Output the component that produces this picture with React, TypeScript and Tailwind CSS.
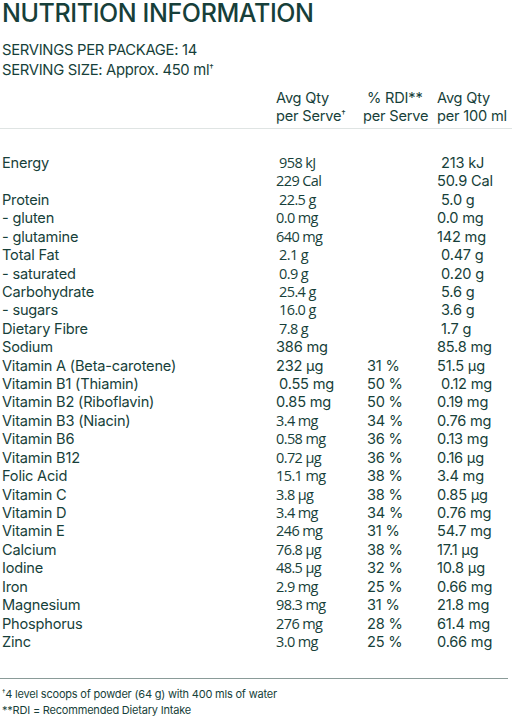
import React from 'react';

type Row = {
  name: string;
  serve: string;
  rdi?: string;
  per100: string;
  small?: boolean; // per-serve value set in the narrower face
  sIn?: boolean; // per-serve value nudged right
  pIn?: boolean; // per-100 value nudged right
  serve2?: string;
  per1002?: string;
};

const rows: Row[] = [
  { name: 'Energy', serve: '958 kJ', serve2: '229 Cal', per100: '213 kJ', per1002: '50.9 Cal', small: true, sIn: true, pIn: true },
  { name: 'Protein', serve: '22.5 g', per100: '5.0 g', small: true, sIn: true, pIn: true },
  { name: '- gluten', serve: '0.0 mg', per100: '0.0 mg', small: true },
  { name: '- glutamine', serve: '640 mg', per100: '142 mg', small: true },
  { name: 'Total Fat', serve: '2.1 g', per100: '0.47 g', small: true, sIn: true, pIn: true },
  { name: '- saturated', serve: '0.9 g', per100: '0.20 g', small: true, sIn: true, pIn: true },
  { name: 'Carbohydrate', serve: '25.4 g', per100: '5.6 g', small: true, sIn: true, pIn: true },
  { name: '- sugars', serve: '16.0 g', per100: '3.6 g', small: true, sIn: true, pIn: true },
  { name: 'Dietary Fibre', serve: '7.8 g', per100: '1.7 g', small: true, sIn: true, pIn: true },
  { name: 'Sodium', serve: '386 mg', per100: '85.8 mg' },
  { name: 'Vitamin A (Beta-carotene)', serve: '232 µg', rdi: '31 %', per100: '51.5 µg' },
  { name: 'Vitamin B1 (Thiamin)', serve: '0.55 mg', rdi: '50 %', per100: '0.12 mg', sIn: true, pIn: true },
  { name: 'Vitamin B2 (Riboflavin)', serve: '0.85 mg', rdi: '50 %', per100: '0.19 mg' },
  { name: 'Vitamin B3 (Niacin)', serve: '3.4 mg', rdi: '34 %', per100: '0.76 mg', small: true },
  { name: 'Vitamin B6', serve: '0.58 mg', rdi: '36 %', per100: '0.13 mg', small: true },
  { name: 'Vitamin B12', serve: '0.72 µg', rdi: '36 %', per100: '0.16 µg', small: true },
  { name: 'Folic Acid', serve: '15.1 mg', rdi: '38 %', per100: '3.4 mg', small: true },
  { name: 'Vitamin C', serve: '3.8 µg', rdi: '38 %', per100: '0.85 µg', small: true },
  { name: 'Vitamin D', serve: '3.4 mg', rdi: '34 %', per100: '0.76 mg', small: true },
  { name: 'Vitamin E', serve: '246 mg', rdi: '31 %', per100: '54.7 mg', small: true },
  { name: 'Calcium', serve: '76.8 µg', rdi: '38 %', per100: '17.1 µg', small: true },
  { name: 'Iodine', serve: '48.5 µg', rdi: '32 %', per100: '10.8 µg', small: true },
  { name: 'Iron', serve: '2.9 mg', rdi: '25 %', per100: '0.66 mg', small: true },
  { name: 'Magnesium', serve: '98.3 mg', rdi: '31 %', per100: '21.8 mg', small: true },
  { name: 'Phosphorus', serve: '276 mg', rdi: '28 %', per100: '61.4 mg', small: true },
  { name: 'Zinc', serve: '3.0 mg', rdi: '25 %', per100: '0.66 mg', small: true },
];

const serveCls = (r: Row) =>
  (r.small ? "font-['Open_Sans',sans-serif] text-[14.5px] tracking-[-0.6px] " : '') + (r.sIn ? 'pl-[3px]' : '');

export default function App() {
  return (
    <div className="w-[516px] min-h-[720px] bg-white text-[#173f3a] font-['Inter',sans-serif] px-[2px]">
      <h1 className="text-[25px] leading-[27px] font-medium tracking-[-0.4px] whitespace-nowrap">NUTRITION INFORMATION</h1>

      <div className="mt-[13px] text-[14.8px] leading-[20px] tracking-[-0.3px]">
        <p>SERVINGS PER PACKAGE: 14</p>
        <p>
          SERVING SIZE: Approx. 450 ml<sup className="text-[9px]">†</sup>
        </p>
      </div>

      <div className="mt-[9px] grid grid-cols-[274px_87px_74px_1fr] text-[14.6px] leading-[18px] tracking-[-0.2px] pb-[3px] border-b border-[#dfe4e3] -mx-[2px] px-[2px] w-[512px]">
        <div />
        <div>
          Avg Qty
          <br />
          per Serve<sup className="text-[9px]">†</sup>
        </div>
        <div>
          <div className="pl-[4px]">% RDI**</div>
          <div>per Serve</div>
        </div>
        <div>
          Avg Qty
          <br />
          per 100 ml
        </div>
      </div>

      <div className="mt-[25px] grid grid-cols-[274px_91px_70px_1fr] text-[14.6px] leading-[18.42px] tracking-[-0.2px]">
        {rows.map((r) => (
          <React.Fragment key={r.name}>
            <div>{r.name}</div>
            <div className={serveCls(r)}>
              {r.serve}
              {r.serve2 && <div className="-ml-[3px]">{r.serve2}</div>}
            </div>
            <div>{r.rdi ?? ''}</div>
            <div className={r.pIn ? 'pl-[4px]' : ''}>
              {r.per100}
              {r.per1002 && <div className="-ml-[4px]">{r.per1002}</div>}
            </div>
          </React.Fragment>
        ))}
      </div>

      <div className="mt-[27px] border-t border-[#8a9b98] w-[508px] -ml-[2px]" />
      <div className="mt-[7px] text-[11px] leading-[16px] tracking-[-0.2px]">
        <p>
          <sup className="text-[7px]">†</sup>4 level scoops of powder (64 g) with 400 mls of water
        </p>
        <p>**RDI = Recommended Dietary Intake</p>
      </div>
    </div>
  );
}
